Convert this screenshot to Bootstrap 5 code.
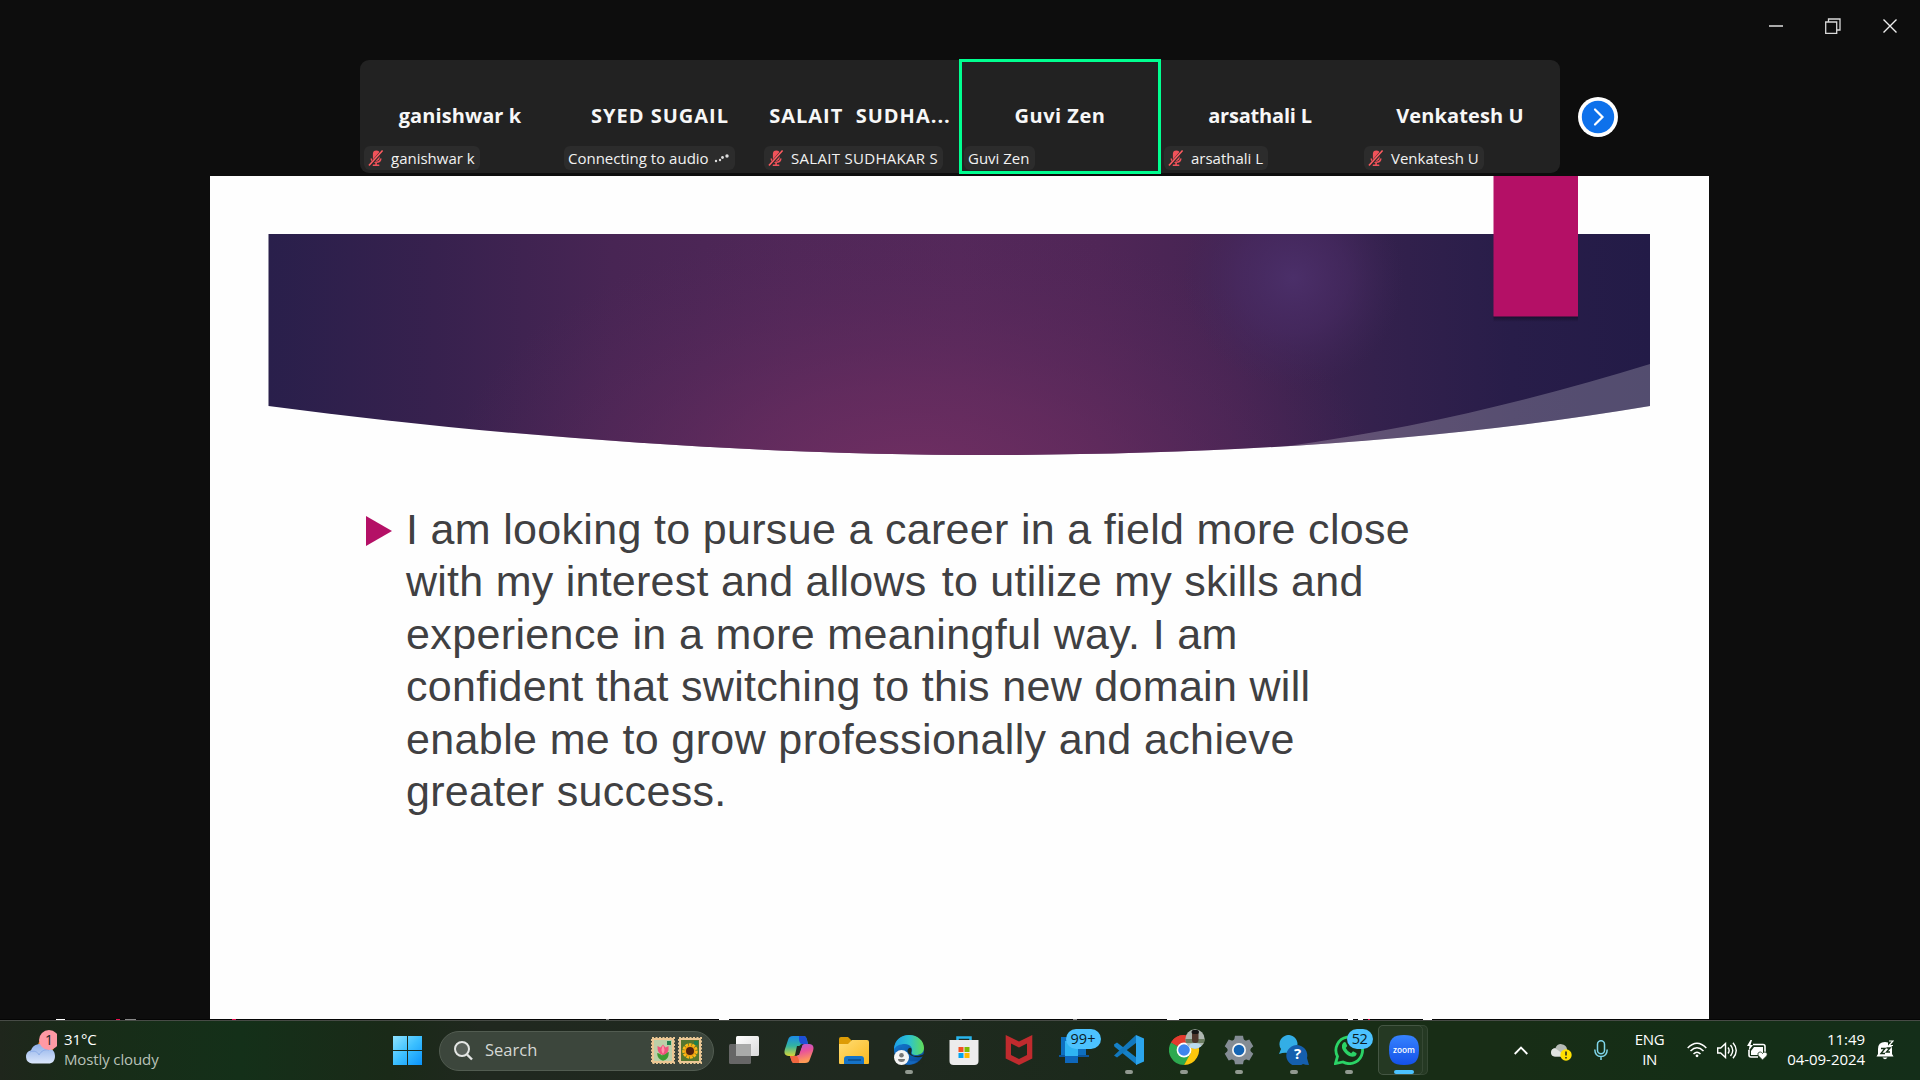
<!DOCTYPE html>
<html lang="en">
<head>
<meta charset="utf-8">
<title>Zoom Meeting</title>
<link href="https://cdn.jsdelivr.net/npm/bootstrap@5.3.0/dist/css/bootstrap.min.css" rel="stylesheet">
<style>
body{width:1920px;height:1080px;background:#0d0d0d;overflow:hidden;font-family:"Open Sans","Noto Sans",sans-serif;color:#fff}
svg{display:block;flex:none}
.titlebar{height:60px;padding-right:23px;gap:42px;padding-bottom:8px}
.filmrow{height:116px;padding-left:360px;gap:18px}
.film{width:1200px;height:113px;background:#222;border-radius:9px}
.tile{width:200px;height:113px}
.tile-name{height:112px;font-size:20px;font-weight:700;white-space:pre;color:#f7f7f7;letter-spacing:.1px}
.tile-tag{left:4px;bottom:3px;height:24px;padding:0 5px 0 4px;border-radius:6px;background:#2c2c2c;font-size:15px;white-space:pre;color:#f2f2f2}
.tile-tag .tag-mic{margin-right:7px}
.ls-wide{letter-spacing:1px}
.ls-mid{letter-spacing:.5px}
.ls-tight{letter-spacing:-.2px}
.ls-tag{letter-spacing:.3px}
.speaking::after{content:"";position:absolute;inset:-1px;border:3px solid #00ff90}
.nextbtn{width:40px;height:40px;margin:0 0 3px -.5px}
.deck{width:1499px;height:843px;margin-left:210px;background:#fefefe;flex:none}
.deck-art{left:0;top:0}
.deck-text{padding:327px 0 0 156px}
.deck-lines{font-family:"Liberation Sans",Arial,sans-serif;font-size:43px;letter-spacing:.32px;line-height:52.4px;color:#404042;white-space:pre;padding-left:14px}
.deck-lines>span{display:table}
.deck-lines .line-gap{letter-spacing:.25px}
.deck-lines .line-gap i{display:inline-block;width:3px}
.deck-lines .line-loose{letter-spacing:.37px}
.bullet{margin-top:13px}
.taskbar{height:60px;border-top:1px solid #474b46;background:linear-gradient(90deg,#1f261c 0,#182c18 90px,#143019 240px,#1a2a18 390px,#20281f 480px,#1f291f 900px,#1c2a1c 1080px,#182d16 1180px,#182d16 1500px,#142e16 1700px,#142e19 1920px)}
.weather{width:393px;height:59px;padding-left:24px;font-size:15px;line-height:20px}
.weather-text{margin:0 0 4px 7px;letter-spacing:-.12px}
.weather-sub{color:#b9c2b8}
.searchbox{width:275px;height:40px;border-radius:20px;margin:0 2px 0 17px;padding:0 11px 0 14px;background:#3c463c;border:1px solid #525c51;font-size:16.5px;color:#d5d8d4}
.search-label{margin-left:12px}
.slot{width:55px;height:59px;padding-top:14px}
.run{width:8px;height:4px;border-radius:2px;background:#919990;bottom:6px;left:50%;transform:translateX(-50%)}
.run-on{width:20px;background:#4cc2ff}
.pillnum{top:8px;height:20px;border-radius:10px;background:#4cc2ff;color:#0b1c26;font-size:14.5px;line-height:19px;text-align:center}
.pill-phone{left:19.5px;width:35px;z-index:2}
.pill-chat{left:25.5px;width:26px;letter-spacing:-.5px}
.chrome-art{margin:-6px -7px 0 0}
.zoomslot::before{content:"";position:absolute;left:2px;top:4px;width:50px;height:50px;border-radius:5px;background:#ffffff0f;border:1px solid #ffffff14}
.zoomslot::after{content:"";position:absolute;left:2px;top:4px;width:45px;height:50px;border-radius:5px;border:1px solid #ffffff14}
.tray{height:58px;font-size:15px;line-height:20px;padding-right:26px;margin-bottom:1px}
.tray-cloud{margin:3px 0 0 23px}
.tray-mic{margin-left:22px}
.tray-gap{margin-left:10px}
.tray-bell{margin-left:11px}
.lang{width:75px;margin:0 0 2px 4px;letter-spacing:-.4px}
.clock{width:97px;margin-bottom:3px;letter-spacing:-.05px}
</style>
<script src="https://cdn.jsdelivr.net/npm/bootstrap@5.3.0/dist/js/bootstrap.bundle.min.js"></script>
</head>
<body class="d-flex flex-column">
<svg width="0" height="0" class="position-absolute">
<defs>
<symbol id="muted" viewBox="0 0 17 18"><path d="M6 4.500a2.800 2.800 0 0 1 5.600 0v4a2.800 2.800 0 0 1-5.600 0z" fill="#f0525a" stroke="#f0525a" stroke-width="1.600"/><path d="M3.500 9.500c.2 3 2.300 4 5.100 4s4.800-1 5-4M8.600 13.500v3M5 16.700h7" stroke="#f0525a" stroke-width="1.700" fill="none"/><path d="M1.300 17.500 15.800 1" stroke="#2c2c2c" stroke-width="3.400"/><path d="M1 17 15.500 1" stroke="#ff5b60" stroke-width="1.700"/></symbol>
</defs></svg>

<header class="titlebar d-flex justify-content-end align-items-center flex-shrink-0">
<svg width="14" height="16"><path d="M0 8h14" stroke="#aaa" stroke-width="2"/></svg>
<svg width="16" height="16" fill="none" stroke="#d9d9d9" stroke-width="1.300"><path d="M.7 4h11v11.300h-11zM3.500 4V1H15v11h-3"/></svg>
<svg width="14" height="14"><path d="M.5.500l13 13M13.500.500l-13 13" stroke="#eee" stroke-width="1.400"/></svg>
</header>

<section class="filmrow d-flex align-items-center flex-shrink-0">
<div class="film d-flex align-self-start">
<div class="tile position-relative"><div class="tile-name d-flex align-items-center justify-content-center"><span>ganishwar k</span></div><div class="tile-tag position-absolute d-flex align-items-center"><svg width="16" height="18" class="tag-mic"><use href="#muted"/></svg><span>ganishwar k</span></div></div>
<div class="tile position-relative"><div class="tile-name d-flex align-items-center justify-content-center"><span class="ls-wide">SYED SUGAIL</span></div><div class="tile-tag position-absolute d-flex align-items-center"><span>Connecting to audio</span><svg width="17" height="10" class="ms-1" fill="#ddd"><circle cx="3" cy="8" r="1.200"/><circle cx="7" cy="7" r="1.200"/><circle cx="9.500" cy="4.500" r="1.400"/><circle cx="14" cy="3" r="1.700"/></svg></div></div>
<div class="tile position-relative"><div class="tile-name d-flex align-items-center justify-content-center"><span class="ls-wide">SALAIT  SUDHA...</span></div><div class="tile-tag position-absolute d-flex align-items-center"><svg width="16" height="18" class="tag-mic"><use href="#muted"/></svg><span class="ls-tag">SALAIT SUDHAKAR S</span></div></div>
<div class="tile position-relative speaking"><div class="tile-name d-flex align-items-center justify-content-center"><span class="ls-mid">Guvi Zen</span></div><div class="tile-tag position-absolute d-flex align-items-center"><span>Guvi Zen</span></div></div>
<div class="tile position-relative"><div class="tile-name d-flex align-items-center justify-content-center"><span class="ls-tight">arsathali L</span></div><div class="tile-tag position-absolute d-flex align-items-center"><svg width="16" height="18" class="tag-mic"><use href="#muted"/></svg><span>arsathali L</span></div></div>
<div class="tile position-relative"><div class="tile-name d-flex align-items-center justify-content-center"><span>Venkatesh U</span></div><div class="tile-tag position-absolute d-flex align-items-center"><svg width="16" height="18" class="tag-mic"><use href="#muted"/></svg><span>Venkatesh U</span></div></div>
</div>
<svg class="nextbtn" viewBox="0 0 40 40"><circle cx="20" cy="20" r="20" fill="#fff"/><circle cx="20" cy="20" r="16.200" fill="#0e71eb"/><path d="M17 12.500l7.500 7.500-7.500 7.500" fill="none" stroke="#fff" stroke-width="2.200" stroke-linecap="round"/></svg>
</section>

<main class="deck position-relative">
<svg class="deck-art position-absolute" width="1499" height="300">
<defs>
<linearGradient id="bandbase" x1="0" x2="1"><stop offset="0" stop-color="#291f4b"/><stop offset=".12" stop-color="#37214e"/><stop offset=".25" stop-color="#482554"/><stop offset=".38" stop-color="#502758"/><stop offset=".5" stop-color="#54285a"/><stop offset=".6" stop-color="#502657"/><stop offset=".7" stop-color="#452453"/><stop offset=".8" stop-color="#34214d"/><stop offset=".9" stop-color="#281d49"/><stop offset="1" stop-color="#231b47"/></linearGradient>
<radialGradient id="bandpink" gradientUnits="userSpaceOnUse" cx="0" cy="0" r="1" gradientTransform="translate(700 320) scale(470 280)"><stop offset="0" stop-color="#763064" stop-opacity=".9"/><stop offset=".4" stop-color="#6a2d60" stop-opacity=".65"/><stop offset="1" stop-color="#54285a" stop-opacity="0"/></radialGradient>
<radialGradient id="bandviolet" gradientUnits="userSpaceOnUse" cx="1083" cy="102" r="110"><stop offset="0" stop-color="#4b2f69"/><stop offset=".5" stop-color="#482b64" stop-opacity=".6"/><stop offset="1" stop-color="#40275a" stop-opacity="0"/></radialGradient>
<clipPath id="bandclip"><path d="M58.500 58H1440V230C1240 264 1010 279 780 279 550 279 290 261 58.500 230z"/></clipPath>
<linearGradient id="dropfade" x2="0" y2="1"><stop offset="0" stop-color="#120b22" stop-opacity=".7"/><stop offset="1" stop-color="#120b22" stop-opacity="0"/></linearGradient>
</defs>
<g clip-path="url(#bandclip)"><rect x="58" y="58" width="1382" height="222" fill="url(#bandbase)"/><rect x="58" y="58" width="1382" height="222" fill="url(#bandpink)"/><rect x="900" y="58" width="400" height="222" fill="url(#bandviolet)"/><path d="M1440 188C1330 222 1210 252 1071 271V290H1440z" fill="#fff" fill-opacity=".22"/></g>
<rect x="1283.500" y="140" width="84.500" height="6" fill="url(#dropfade)"/>
<rect x="1283.500" width="84.500" height="140.500" fill="#b41066"/>
</svg>
<div class="deck-text d-flex align-items-start">
<svg width="26" height="30" class="bullet"><path d="M0 0 26 15 0 30z" fill="#b41066"/></svg>
<div class="deck-lines"><span>I am looking to pursue a career in a field more close</span><span class="line-gap">with my interest and allows <i></i>to utilize my skills and</span><span class="line-loose">experience in a more meaningful way. I am</span><span>confident that switching to this new domain will</span><span class="line-loose">enable me to grow professionally and achieve</span><span>greater success.</span></div>
</div>
</main>

<svg width="1920" height="1"><rect width="1920" height="1" fill="#050505"/><path d="M56 .5h9M719 .5h10M1167 .5h12M1348 .5h5M1358 .5h5M1423 .5h9" stroke="#fff"/><path d="M116 .5h4M232 .5h4M1368 .5h2" stroke="#e8114f"/><path d="M125 .5h11M606 .5h3M960 .5h2M1073 .5h4" stroke="#888"/></svg>

<footer class="taskbar d-flex flex-shrink-0 align-items-center">
<div class="weather d-flex align-items-center flex-shrink-0">
<svg width="33" height="42" viewBox="24 1029 33 42"><defs><linearGradient id="cl" x2="0" y2="1"><stop offset="0" stop-color="#8fb0ea"/><stop offset="1" stop-color="#dbe7fb"/></linearGradient></defs><circle cx="46" cy="1045" r="8" fill="#f28a1c"/><path d="M32 1062.500a6.800 6.800 0 0 1-1-13.300 9 9 0 0 1 15.500-2.800c5 .1 8.500 3.600 8.500 8.500s-2.600 7.600-6.500 7.600z" fill="url(#cl)"/><path d="M30 1051c4-2 8 0 9 3 2-4 6-6 10-5" stroke="#7fa3e4" fill="none" opacity=".7"/><circle cx="49" cy="1039" r="10" fill="#ff99a4"/><text x="49" y="1044" font-size="14" text-anchor="middle" fill="#222">1</text></svg>
<div class="weather-text"><div>31°C</div><div class="weather-sub">Mostly cloudy</div></div>
</div>
<svg width="29" height="29" viewBox="0 0 29 29"><defs><linearGradient id="win" x2="1" y2="1"><stop offset="0" stop-color="#8fe3ff"/><stop offset=".5" stop-color="#3cc0ff"/><stop offset="1" stop-color="#0a93fb"/></linearGradient></defs><path d="M0 0h14v14H0zM15 0h14v14H15zM0 15h14v14H0zM15 15h14v14H15z" fill="url(#win)"/></svg>
<div class="searchbox d-flex align-items-center flex-shrink-0">
<svg width="19" height="20"><circle cx="8" cy="8" r="7" fill="#59615a" stroke="#e4e6e4" stroke-width="2"/><path d="M13 13.500l5 5" stroke="#e4e6e4" stroke-width="2.400"/></svg>
<span class="search-label">Search</span>
<svg width="51" height="27" class="ms-auto"><g stroke="#e9c793" stroke-width="2" stroke-dasharray="2 1.500"><rect x="1" y="1" width="22" height="25" fill="#edc795"/><rect x="28" y="1" width="22" height="25" fill="#edc795"/></g><rect x="3" y="3" width="18" height="21" fill="#bcd0a8"/><rect x="30" y="3" width="18" height="21" fill="#55762f"/><path d="M16 4h4v4h-4zM43 4h4v4h-4z" fill="#1f7f4d"/><path d="M12 23V15M12 23q-5-2-5-6 4 1 5 5 1-5 5-6 0 6-5 7" stroke="#3d9b32" stroke-width="1.500" fill="#3d9b32"/><path d="M6.500 9l3 1.500L12 7.500l2.500 3 3-1.500q1 8-5.500 9-6-1-5.500-9z" fill="#f0527c"/><path d="M12 8q-3 5 0 9 3-4 0-9" fill="#ff91a8"/><circle cx="39" cy="14" r="6" fill="none" stroke="#ffb814" stroke-width="3.500" stroke-dasharray="2.600 .7"/><circle cx="39" cy="14" r="5.500" fill="#f0a012"/><circle cx="39" cy="14" r="4" fill="#51220f"/></svg>
</div>
<div class="slot position-relative d-flex justify-content-center"><svg width="30" height="30"><defs><linearGradient id="tv" x2="1" y2="1"><stop offset="0" stop-color="#fff"/><stop offset="1" stop-color="#dadada"/></linearGradient></defs><rect x="7" y="1" width="23" height="20" rx="1.500" fill="url(#tv)"/><rect x="0" y="9" width="22" height="20" rx="1.500" fill="#666"/><path d="M7 9h15v12H7z" fill="#a9aaa9"/></svg></div>
<div class="slot position-relative d-flex justify-content-center"><svg width="30" height="30" viewBox="0 0 30 30"><defs><linearGradient id="ca" x2="0" y2="1"><stop offset="0" stop-color="#1b8be8"/><stop offset=".5" stop-color="#33b4a0"/><stop offset="1" stop-color="#d7d637"/></linearGradient><linearGradient id="cb" x2=".3" y2="1"><stop offset="0" stop-color="#a45be8"/><stop offset=".5" stop-color="#e8529b"/><stop offset="1" stop-color="#ff9a56"/></linearGradient></defs><path d="M9 1h10c3 0 3 1 4 4l1 4h-5c-3 0-4 2-5 5l-2 5c-1 2-2 2-4 2H5c-5 0-5-4-4-7l3-9c1-3 2-4 5-4z" fill="url(#ca)"/><path d="M15 1h4c3 0 3 1 4 4l1 4h-5c-3 0-3-1-4-4z" fill="#1d4fd7"/><path d="M21 28H11c-3 0-3-1-4-4l-1-3h5c3 0 4-2 5-5l2-5c1-2 2-2 4-2h3c5 0 5 4 4 7l-3 8c-1 3-2 4-5 4z" fill="url(#cb)"/><path d="M15 28h-4c-3 0-3-1-4-4l-1-3h5c3 0 3 2 4 4z" fill="#f1663f"/><path d="M13 11h5l-3 9h-4z" fill="#20281f"/></svg></div>
<div class="slot position-relative d-flex justify-content-center"><svg width="30" height="30"><defs><linearGradient id="fo" x2="1" y2="1"><stop offset="0" stop-color="#ffdd75"/><stop offset="1" stop-color="#fbb91f"/></linearGradient></defs><path d="M0 4q0-2 2-2h7l4 4v6H0z" fill="#dd9c06"/><path d="M0 9h9l4-4h15q2 0 2 2v21q0 1-1 1H1q-1 0-1-1z" fill="url(#fo)"/><path d="M5 29v-5q0-3 3-3h14q3 0 3 3v5z" fill="#1573c8"/><path d="M9 25h13" stroke="#0b4a87" stroke-width="1.500"/></svg></div>
<div class="slot position-relative d-flex justify-content-center"><svg width="30" height="30" viewBox="0 0 30 30"><defs><linearGradient id="ea" x1="0" x2="1"><stop offset="0" stop-color="#1c9ee8"/><stop offset=".5" stop-color="#2cc3d0"/><stop offset="1" stop-color="#62dd55"/></linearGradient><linearGradient id="eb" x2="1" y2="1"><stop offset="0" stop-color="#1380d8"/><stop offset="1" stop-color="#0b4797"/></linearGradient></defs><circle cx="15" cy="15" r="15" fill="url(#eb)"/><path d="M31 20v8l-4 3z" fill="#1f291f"/><path d="M0 13C1 5 7 0 15 0c9 0 15 6 15 13 0 5-4 7-8 7-3 0-5-1-4-3 1-4-2-8-7-8S1 11 0 15z" fill="url(#ea)"/><path d="M8 12c-1 9 5 16 16 14-8 7-20 3-22-6 0-4 2-7 6-8z" fill="#1467bd"/><path d="M17.500 16c-1.500 3.500 1 5 4.500 5 3 0 5-.5 8-2l-1 2.500c-5 1.500-11 .5-14-2.500-2-2-2-4-.5-5.500s3.500-.5 3 2.500z" fill="#1d2a20"/><circle cx="7.500" cy="22.500" r="7.500" fill="#f5f5f5"/><circle cx="7.500" cy="20.200" r="2.300" fill="#777"/><path d="M4 24h7q0 3-3.500 3T4 24z" fill="#777"/></svg><i class="run position-absolute"></i></div>
<div class="slot position-relative d-flex justify-content-center"><svg width="30" height="30"><path d="M8.500 8V2.500h13V8" fill="none" stroke="#28b5ec" stroke-width="2.500"/><path d="M.5 5h29v21q0 4-4 4h-21q-4 0-4-4z" fill="#ececec"/><path fill="#f25022" d="M9.500 12h5v5h-5z"/><path fill="#7fba00" d="M15.500 12h5v5h-5z"/><path fill="#00a4ef" d="M9.500 18h5v5h-5z"/><path fill="#ffb900" d="M15.500 18h5v5h-5z"/></svg></div>
<div class="slot position-relative d-flex justify-content-center"><svg width="28" height="30"><path d="M.7 0 14 6.500 27.300 0v23.500L14 30 .7 23.500zM6 8.500v11.600l8 4 8-4V8.500l-8 4z" fill="#c02b2e" fill-rule="evenodd"/></svg></div>
<div class="slot position-relative d-flex justify-content-center"><svg width="30" height="30"><path d="M2 2h25v19H2z" fill="#0e6fc0"/><path d="M0 20h30v2H0z" fill="#0c559c"/><path d="M6 6h13v22H6z" fill="#2fb4f3"/><path d="M6 21h13v7H6z" fill="#0e67bb"/></svg><span class="pillnum pill-phone position-absolute">99+</span></div>
<div class="slot position-relative d-flex justify-content-center"><svg width="30" height="30"><path d="M0 9.500 3 7.500 23 23v7L.3 11.500z" fill="#1581c8"/><path d="M0 20.500 22 0v8L3 22.500z" fill="#1278bd"/><path d="M22 0l8 3.500v23L22 30z" fill="#2ba5ed"/></svg><i class="run position-absolute"></i></div>
<div class="slot position-relative d-flex justify-content-center"><svg width="37" height="37" viewBox="0 -6 37 37" class="chrome-art"><path d="M15 15V0a15 15 0 0 0-13 7.500z" fill="#e33b2e"/><path d="M15 15 2 7.500A15 15 0 0 1 28 7.500z" fill="#e33b2e"/><path d="M2 7.500A15 15 0 0 0 15 30l7-11-7-4z" fill="#2da94f"/><path d="M28 7.500A15 15 0 0 1 15 30l6.500-11.500L15 8z" fill="#fdc70c"/><circle cx="15" cy="15" r="7.400" fill="#fff"/><circle cx="15" cy="15" r="5.800" fill="#3f85ee"/><clipPath id="av"><circle cx="26" cy="4" r="9.700"/></clipPath><g clip-path="url(#av)"><path d="M16-6h20v20H16z" fill="#aeb7b1"/><path d="M16 4h20v4H16z" fill="#6b7d61"/><path d="M19 14q0-6 7-6t7 6z" fill="#b9dbef"/><rect x="23" y="-4" width="6.500" height="12" rx="3" fill="#4f362c"/><rect x="22.500" y="-5" width="7.500" height="4" rx="2" fill="#151515"/></g></svg><i class="run position-absolute"></i></div>
<div class="slot position-relative d-flex justify-content-center"><svg width="30" height="30" viewBox="0 0 30 30"><g fill="#848c94"><circle cx="15" cy="15" r="11.500"/><g id="gt"><path d="M11 .8h8l1.200 6H9.800zM11 29.200h8l1.200-6H9.800z"/></g><use href="#gt" transform="rotate(60 15 15)"/><use href="#gt" transform="rotate(120 15 15)"/></g><circle cx="15" cy="15" r="7" fill="#f5f5f5"/><circle cx="15" cy="15" r="5.300" fill="#1565b4"/></svg><i class="run position-absolute"></i></div>
<div class="slot position-relative d-flex justify-content-center"><svg width="30" height="30" viewBox="0 0 30 30"><path d="M0 19l2-5A9 9 0 1 1 9 18q-4-1-9 1z" fill="#33aee6"/><path d="M30 30q-4 0-6-1A10.500 10.500 0 1 1 28 23z" fill="#155fae"/><text x="18.500" y="24" font-size="15" font-weight="700" text-anchor="middle" fill="#fff">?</text></svg><i class="run position-absolute"></i></div>
<div class="slot position-relative d-flex justify-content-center"><svg width="30" height="30" viewBox="0 0 30 30"><path d="M1.500 28.500l2-7A13.300 13.300 0 1 1 9 27z" fill="none" stroke="#2bd366" stroke-width="2.800"/><path d="M9 8q2-2 3 0l1.300 3-1.600 2q2 4 5.500 5.300l1.800-2.100 3.300 1.700c.8.500 0 2.600-1.300 3.400-5 2.300-12-4-13-8.600Q7.500 9.500 9 8z" fill="#2bd366"/></svg><span class="pillnum pill-chat position-absolute">52</span><i class="run position-absolute"></i></div>
<div class="slot position-relative d-flex justify-content-center zoomslot"><svg width="30" height="30"><defs><linearGradient id="zm" x2="0" y2="1"><stop offset="0" stop-color="#2a7bff"/><stop offset="1" stop-color="#0647e8"/></linearGradient></defs><path d="M15 0C26 0 30 4 30 15s-4 15-15 15S0 26 0 15 4 0 15 0z" fill="url(#zm)"/><text x="15" y="17.700" font-size="9.500" font-weight="600" text-anchor="middle" fill="#fff" textLength="22" lengthAdjust="spacingAndGlyphs">zoom</text></svg><i class="run run-on position-absolute"></i></div>

<div class="tray d-flex align-items-center ms-auto flex-shrink-0">
<svg width="14" height="9"><path d="M.7 8 7 1.500 13.300 8" fill="none" stroke="#fff" stroke-width="1.800"/></svg>
<svg width="21" height="18" class="tray-cloud"><path d="M4 13.500a4.300 4.300 0 0 1 .5-8.500A6 6 0 0 1 16 6v7.500z" fill="#b6bbb6"/><path d="M4 13.500a4 4 0 0 1 0-8q5 2 9 8z" fill="#e1e4e1"/><circle cx="15" cy="12" r="5.700" fill="#ffe100"/><path d="M15 8.500v4M15 14v1.500" stroke="#222" stroke-width="1.500"/></svg>
<svg width="14" height="20" class="tray-mic" fill="none" stroke="#7fd6ea" stroke-width="1.500"><rect x="3.500" y=".8" width="7" height="13" rx="3.500"/><path d="M.8 9.500q.2 7 6.200 7t6.200-7M7 16.500V20"/></svg>
<div class="lang text-center"><div>ENG</div><div>IN</div></div>
<svg width="20" height="16" fill="none" stroke="#fff" stroke-width="1.500"><path d="M.7 6q9.300-9.500 18.600 0M3.500 9q6.500-6.500 13 0M6.500 12q3.500-3.500 7 0"/><circle cx="10" cy="13.800" r="1.400" fill="#fff" stroke="none"/></svg>
<svg width="20" height="17" class="tray-gap" fill="none" stroke="#fff" stroke-width="1.400"><path d="M.7 6v5h3L8.500 15.500v-14L3.700 6zM11 5.500q2.300 3 0 6M13.500 3q4.500 5.500 0 11M16 .8q6.500 7.700 0 15.400"/></svg>
<svg width="21" height="20" class="tray-gap"><path d="M6 4.500h10q2 0 2 2v6M2 10v5q0 2 2 2h7" fill="none" stroke="#fff" stroke-width="1.600"/><path d="M7 7h9v6l-5 2H4v-4z" fill="#fff"/><path d="M3.500 0 0 6h2.500L1.500 11 6 5H3.500L5 0z" fill="#fff"/><path d="M15.500 20l-4.200-4.300q-1.300-3.500 2-3.700 1.500 0 2.200 1.500 1-1.500 2.400-1.500 3.200.3 2 3.700z" fill="#fff" stroke="#142e16" stroke-width=".8"/></svg>
<div class="clock text-end"><div>11:49</div><div>04-09-2024</div></div>
<svg width="18" height="20" class="tray-bell"><path d="M2 9q0-7 7-7t7 7v5l1.500 2.500H.5L2 14z" fill="#fff"/><path d="M6.500 17.500h5q-2.500 3.500-5 0z" fill="#fff"/><path d="M5 8.500h4l-4 5h4M10.500 8h3.500l-3.500 4H14" fill="none" stroke="#142e16" stroke-width="1.400"/><path d="M12 0h5v6h-5z" fill="#142e16"/><path d="M13 1h4l-4 4.500h4" fill="none" stroke="#fff" stroke-width="1.200"/></svg>
</div>
</footer>
</body>
</html>
